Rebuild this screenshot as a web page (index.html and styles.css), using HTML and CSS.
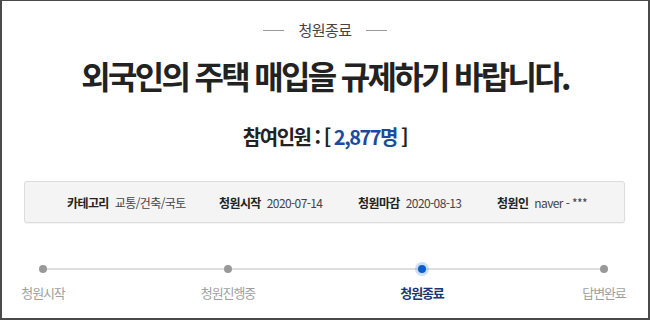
FILE: index.html
```html
<!DOCTYPE html>
<html lang="ko">
<head>
<meta charset="utf-8">
<link rel="stylesheet" href="styles.css">
</head>
<body>
<div class="frame">
  <div class="status"><span class="dash"></span><span class="status-text">청원종료</span><span class="dash"></span></div>
  <h1 class="title">외국인의 주택 매입을 규제하기 바랍니다.</h1>
  <div class="count">참여인원 : [ <span class="num">2,877명</span> ]</div>
  <div class="info">
    <div class="item"><span class="key">카테고리</span><span class="val">교통/건축/국토</span></div>
    <div class="item"><span class="key">청원시작</span><span class="val">2020-07-14</span></div>
    <div class="item"><span class="key">청원마감</span><span class="val">2020-08-13</span></div>
    <div class="item"><span class="key">청원인</span><span class="val">naver - ***</span></div>
  </div>
  <div class="steps">
    <div class="step"><span class="dot"></span><span class="label">청원시작</span></div>
    <div class="step"><span class="dot"></span><span class="label">청원진행중</span></div>
    <div class="step active"><span class="dot"></span><span class="label">청원종료</span></div>
    <div class="step"><span class="dot"></span><span class="label">답변완료</span></div>
  </div>
</div>
</body>
</html>
```
FILE: styles.css
```css
html, body { margin: 0; padding: 0; background: #fff; }
body { font-family: "Noto Sans CJK KR", "Noto Sans", sans-serif; color: #333; }
.frame {
  width: 650px; height: 320px; box-sizing: border-box;
  border: 2px solid #4a4a4a; border-top-width: 1px;
  padding-top: 19px;
}
.status {
  display: flex; justify-content: center; align-items: center; gap: 15px;
  font-size: 15px; line-height: 20px; color: #444;
}
.dash { width: 21px; height: 1px; background: #999; }
.status-text { letter-spacing: -0.6px; }
.title {
  margin: 15px 0 0; text-align: center;
  font-size: 32px; line-height: 40px; font-weight: 700; color: #222;
  letter-spacing: -2.7px;
}
.count {
  margin-top: 28px; text-align: center;
  font-size: 20px; line-height: 28px; font-weight: 700; color: #222;
  letter-spacing: -1.5px;
}
.count .num { color: #1b4c9c; }
.info {
  margin: 30px 23px 0 22px; height: 42px; box-sizing: border-box;
  background: #f4f4f4; border: 1px solid #dcdcdc; border-radius: 3px;
  box-shadow: 0 1px 1px rgba(0,0,0,0.05);
  display: flex; align-items: center; padding-left: 42px;
  font-size: 12px; letter-spacing: -0.6px;
}
.item { display: flex; align-items: center; gap: 6px; }
.item:nth-child(1) { width: 152px; }
.item:nth-child(2) { width: 139px; }
.item:nth-child(3) { width: 139px; }
.key { font-weight: 700; color: #222; }
.val { color: #444; }
.steps {
  position: relative; margin: 42px 0 0 41px; width: 561px;
  display: grid; grid-template-columns: 185px 194px 182px 0;
}
.steps::before {
  content: ""; position: absolute; left: 0; right: 0; top: 3px;
  height: 2px; background: #dedede;
}
.step { position: relative; width: 0; display: flex; flex-direction: column; align-items: center; }
.dot { flex: none; width: 8px; height: 8px; border-radius: 50%; background: #999; }
.label { margin-top: 11px; white-space: nowrap; font-size: 13px; line-height: 18px; color: #a0a0a0; letter-spacing: -1.1px; }
.step.active .dot { background: #0a5fc8; box-shadow: 0 0 0 3px rgba(80,150,240,0.3); }
.step.active .label { color: #17376e; font-weight: 700; }
```
